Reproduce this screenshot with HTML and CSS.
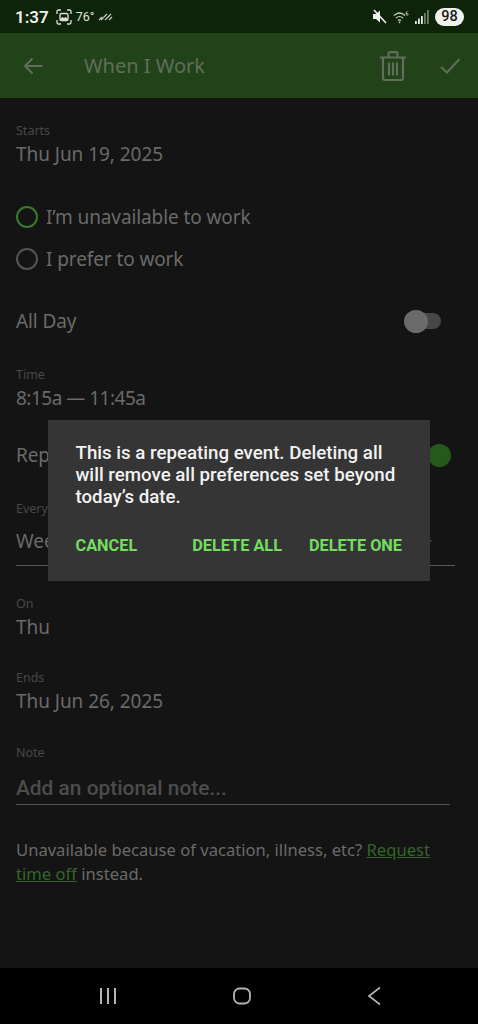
FILE: index.html
```html
<!DOCTYPE html>
<html lang="en">
<head>
  <meta charset="UTF-8" />
  <meta name="viewport" content="width=device-width, initial-scale=1.0"/>
  <title>When I Work</title>
  <link rel="stylesheet" href="styles.css">
</head>
<body>
  <div class="phone">
    <div class="statusbar">
      <span class="clock">1:37</span>
      <svg class="ic-capture" width="16" height="16" viewBox="0 0 16 16" fill="none" stroke="#d8e0d4" stroke-width="1.3">
        <path d="M1 5V2.5Q1 1 2.5 1H5M11 1h2.500Q15 1 15 2.500V5M15 11v2.500Q15 15 13.500 15H11M5 15H2.500Q1 15 1 13.500V11"/>
        <rect x="4" y="4.500" width="8" height="7" rx="1.500" stroke-width="1.400"/>
        <path d="M4.500 9.500l2-1.500 1.500 1 1.500-1 2 1.500V11h-7z" fill="#d8e0d4" stroke="none"/>
      </svg>
      <span class="temp">76°</span>
      <svg class="ic-stripes" width="15" height="8" viewBox="0 0 15 8" stroke="#c4ccc0" stroke-width="1.200">
        <path d="M1 7l3-3M3 7l6-6M7 7l6-6M11 7l3-3"/>
      </svg>
      <span class="status-right">
        <svg width="15" height="15" viewBox="0 0 15 15">
          <path d="M1 5h3l4-3.500v12L4 10H1z" fill="#f0f2ee"/>
          <path d="M2 1l12 13" stroke="#f0f2ee" stroke-width="1.600"/>
        </svg>
        <svg class="ic-wifi" width="16" height="14" viewBox="0 0 16 14" fill="none" stroke="#c8d0c4" stroke-width="1.200">
          <path d="M1 5.500q5.500-5 11 0M3 8q3.500-3 7 0M5 10.500q1.500-1.300 3 0"/>
          <circle cx="6.500" cy="12.300" r=".9" fill="#c8d0c4" stroke="none"/>
          <path d="M14.500 1.500q-1.500 0-1.500 2t1.200 1.800q.9 0 .9-1.100t-1.900-.8" stroke-width=".8"/>
        </svg>
        <svg class="ic-signal" width="14" height="14" viewBox="0 0 14 14">
          <rect x="0" y="11" width="1.800" height="3" fill="#e8ece6"/>
          <rect x="3" y="8.500" width="1.800" height="5.500" fill="#e8ece6"/>
          <rect x="6" y="6" width="1.800" height="8" fill="#e8ece6"/>
          <rect x="9" y="3" width="1.800" height="11" fill="#6d7a68"/>
          <rect x="12" y="0" width="1.800" height="14" fill="#6d7a68"/>
        </svg>
        <span class="battery">98</span>
      </span>
    </div>

    <header class="toolbar">
      <svg class="ic-back" width="20" height="18" viewBox="0 0 20 18" fill="none" stroke="#5f6f59" stroke-width="2">
        <path d="M19.500 9H2M9.500 1.500L2 9l7.500 7.500"/>
      </svg>
      <h1>When I Work</h1>
      <svg class="ic-trash" width="26" height="30" viewBox="0 0 26 30" fill="none" stroke="#5f6f59" stroke-width="2.200">
        <path d="M0 6.500h26M8.500 6V2.500Q8.500 1.200 10 1.200h6q1.500 0 1.500 1.300V6M3 7v20q0 2 2 2h16q2 0 2-2V7"/>
        <path d="M9 11.500v13M13 11.500v13M17 11.500v13"/>
      </svg>
      <svg class="ic-check" width="20" height="16" viewBox="0 0 20 16" fill="none" stroke="#5f6f59" stroke-width="2">
        <path d="M1 9l6 5.500L19.500 1"/>
      </svg>
    </header>

    <main class="form">
      <div class="field first">
        <div class="label">Starts</div>
        <div class="value">Thu Jun 19, 2025</div>
      </div>

      <div class="radios">
        <div class="radio-row"><span class="radio on"></span>I’m unavailable to work</div>
        <div class="radio-row"><span class="radio"></span>I prefer to work</div>
      </div>

      <div class="switch-row allday">
        <span>All Day</span>
        <span class="switch"><span class="thumb"></span></span>
      </div>

      <div class="field time">
        <div class="label">Time</div>
        <div class="value">8:15a — 11:45a</div>
      </div>

      <div class="switch-row repeat">
        <span>Repeats</span>
        <span class="thumb-on"></span>
      </div>

      <div class="field every">
        <div class="label">Every</div>
        <div class="select">Week<span class="caret"></span></div>
      </div>

      <div class="field on-day">
        <div class="label">On</div>
        <div class="value">Thu</div>
      </div>

      <div class="field ends">
        <div class="label">Ends</div>
        <div class="value">Thu Jun 26, 2025</div>
      </div>

      <div class="field note">
        <div class="label">Note</div>
        <div class="note-input">Add an optional note...</div>
      </div>

      <p class="hint">Unavailable because of vacation, illness, etc? <a href="#">Request time off</a> instead.</p>
    </main>

    <nav class="navbar">
      <svg width="18" height="18" viewBox="0 0 18 18" stroke="#b4b4b4" stroke-width="2">
        <path d="M2 1v16M9 1v16M16 1v16"/>
      </svg>
      <svg width="18" height="18" viewBox="0 0 18 18" fill="none" stroke="#b4b4b4" stroke-width="1.800">
        <rect x="1" y="1.500" width="16" height="15" rx="5.500"/>
      </svg>
      <svg width="18" height="18" viewBox="0 0 18 18" fill="none" stroke="#b4b4b4" stroke-width="1.700">
        <path d="M14 .5L3 9l11 8.500"/>
      </svg>
    </nav>

    <div class="dialog">
      <p>This is a repeating event. Deleting all will remove all preferences set beyond today’s date.</p>
      <div class="dialog-actions">
        <button class="cancel">Cancel</button>
        <button>Delete All</button>
        <button>Delete One</button>
      </div>
    </div>
  </div>
</body>
</html>
```

FILE: styles.css
```css
body {
  margin: 0;
  background: #141414;
  font-family: "Noto Sans", sans-serif;
  color: #6a6a6a;
}

.phone {
  position: relative;
  width: 478px;
  height: 1024px;
  display: flex;
  flex-direction: column;
  overflow: hidden;
}

/* status bar */
.statusbar {
  height: 33px;
  flex: none;
  background: #0e2409;
  display: flex;
  align-items: center;
  padding: 0 14px 0 15px;
  font-family: Roboto, sans-serif;
  color: #eef0ec;
}

.clock {
  font-size: 17px;
  font-weight: 600;
  margin-right: 7px;
}

.ic-capture {
  margin-right: 4px;
}

.temp {
  font-size: 12.500px;
  margin-right: 3px;
  color: #dfe4dc;
}

.status-right {
  margin-left: auto;
  display: flex;
  align-items: center;
}

.ic-wifi {
  margin-left: 6px;
}

.ic-signal {
  margin-left: 6px;
}

.battery {
  margin-left: 6px;
  width: 29px;
  height: 18px;
  border-radius: 9px;
  background: #f0f2ee;
  color: #14200f;
  font-size: 14.500px;
  font-weight: 500;
  line-height: 18px;
  text-align: center;
}

/* toolbar */
.toolbar {
  height: 65px;
  flex: none;
  background: #22421a;
  display: flex;
  align-items: center;
  padding: 0 18px 0 23px;
}

.toolbar h1 {
  margin: 0 0 0 41px;
  flex: 1;
  font-size: 20px;
  font-weight: 400;
  color: #5f6f59;
}

.ic-trash {
  margin-right: 34px;
}

/* form */
.form {
  flex: 1;
  padding: 0 16px;
}

.field.first {
  margin-top: 24px;
}

.label {
  font-size: 12.500px;
  line-height: 18px;
  color: #484848;
}

.value {
  font-size: 19px;
  line-height: 28px;
  letter-spacing: -0.05px;
}

.radios {
  margin-top: 28px;
}

.radio-row {
  height: 42px;
  display: flex;
  align-items: center;
  gap: 8px;
  font-size: 19px;
  letter-spacing: -0.1px;
}

.radio {
  width: 18px;
  height: 18px;
  border: 2.500px solid #555;
  border-radius: 50%;
}

.radio.on {
  border-color: #3a7a2a;
}

.switch-row {
  height: 40px;
  display: flex;
  align-items: center;
  justify-content: space-between;
  font-size: 19px;
  letter-spacing: -0.1px;
}

.allday {
  margin-top: 21px;
}

.switch {
  position: relative;
  width: 26px;
  height: 16px;
  margin-right: 21px;
  background: #474747;
  border-radius: 8px;
}

.thumb {
  position: absolute;
  left: -11px;
  top: -3.500px;
  width: 24px;
  height: 23px;
  border-radius: 50%;
  background: #6b6b6b;
}

.thumb-on {
  width: 23px;
  height: 23px;
  margin-right: 11px;
  border-radius: 50%;
  background: #25591b;
}

.time {
  margin-top: 25px;
}

.time .value {
  letter-spacing: -0.5px;
}

.repeat {
  margin-top: 23px;
}

.every {
  margin-top: 25px;
}

.select {
  position: relative;
  width: 439px;
  height: 48px;
  box-sizing: border-box;
  border-bottom: 1.500px solid #595959;
  font-size: 19px;
  line-height: 47px;
}

.caret {
  position: absolute;
  right: 23px;
  top: 22px;
  border: 4px solid transparent;
  border-top: 5px solid #4a4a4a;
}

.on-day {
  margin-top: 29px;
}

.ends {
  margin-top: 28px;
}

.note {
  margin-top: 29px;
}

.note-input {
  width: 434px;
  height: 43px;
  box-sizing: border-box;
  padding-top: 11px;
  border-bottom: 1.500px solid #555;
  font-family: Roboto, sans-serif;
  font-size: 20.900px;
  font-weight: 500;
  line-height: 30px;
  color: #4c4c4c;
}

.hint {
  margin: 33px 0 0;
  max-width: 425px;
  font-size: 16.600px;
  line-height: 24px;
}

.hint a {
  color: #33662a;
}

/* bottom nav */
.navbar {
  height: 56px;
  flex: none;
  box-sizing: border-box;
  padding-left: 5px;
  background: #000;
  display: flex;
  align-items: center;
  justify-content: center;
  gap: 115.500px;
}

/* dialog */
.dialog {
  position: absolute;
  left: 48px;
  top: 420px;
  width: 382px;
  height: 161px;
  box-sizing: border-box;
  padding: 22px 28px 24px 27.500px;
  background: #353535;
  font-family: Roboto, sans-serif;
}

.dialog p {
  margin: 0;
  font-size: 18.700px;
  font-weight: 500;
  line-height: 22px;
  color: #f2f2f2;
}

.dialog-actions {
  margin-top: 26px;
  display: flex;
  gap: 27px;
}

.dialog-actions button {
  padding: 0;
  border: none;
  background: none;
  font-family: Roboto, sans-serif;
  font-size: 16.300px;
  font-weight: 700;
  line-height: 24px;
  text-transform: uppercase;
  color: #74dc60;
}

.dialog-actions .cancel {
  margin-right: auto;
}
```
